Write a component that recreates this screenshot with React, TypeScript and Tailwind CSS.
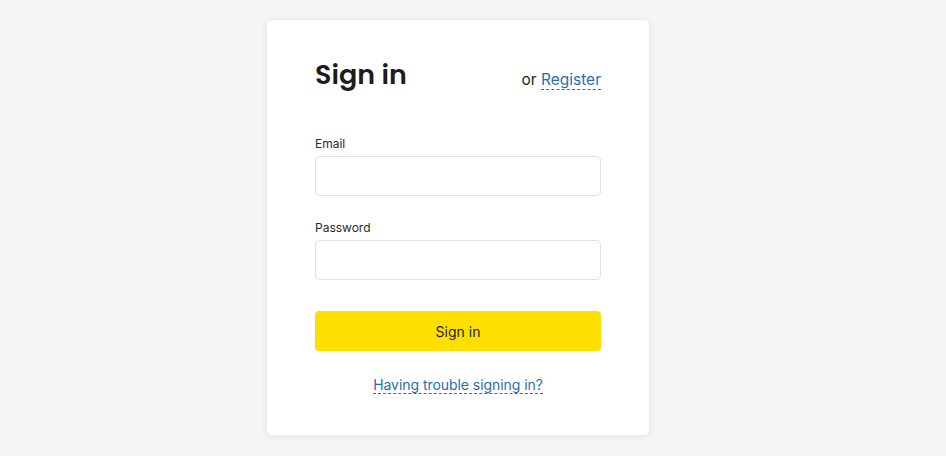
import React from "react";

export default function App() {
  return (
    <div className="min-h-[456px] w-full bg-[#f5f5f5] pl-[266px] pt-[19px]" style={{ fontFamily: "Inter, 'Noto Sans', sans-serif" }}>
      <div className="w-[384px] rounded-[6px] bg-white px-[48px] pt-[34px] pb-[39px] shadow-[0_1px_6px_rgba(0,0,0,0.07)] border border-[#ececec]">
        <div className="flex items-end justify-between">
          <h1 className="mb-[-1px] pt-[1px] text-[27px] leading-[40px] font-semibold text-[#1b1d1f]" style={{ fontFamily: "Poppins, Lato, Inter, sans-serif" }}>
            Sign in
          </h1>
          <div className="text-[15.5px] leading-[24px] text-[#1b1d1f] pb-[2px]">
            or{" "}
            <a className="text-[#2b6cb0] border-b border-dashed border-[#2b6cb0]">Register</a>
          </div>
        </div>
        <div className="mt-[41px]">
          <label className="block text-[12px] leading-[18px] text-[#2a2a2a]">Email</label>
          <input className="mt-[3px] block h-[40px] w-full rounded-[4px] border border-[#e2e2e2] bg-white" />
        </div>
        <div className="mt-[23px]">
          <label className="block text-[12px] leading-[18px] text-[#2a2a2a]">Password</label>
          <input type="password" className="mt-[3px] block h-[40px] w-full rounded-[4px] border border-[#e2e2e2] bg-white" />
        </div>
        <button className="mt-[31px] h-[40px] w-full rounded-[4px] bg-[#ffdf00] text-[14px] text-[#1b1d1f]">Sign in</button>
        <div className="mt-[21px] text-center">
          <a className="text-[14px] leading-[20px] tracking-[-0.004em] text-[#2b6cb0] border-b border-dashed border-[#2b6cb0]">Having trouble signing in?</a>
        </div>
      </div>
    </div>
  );
}
